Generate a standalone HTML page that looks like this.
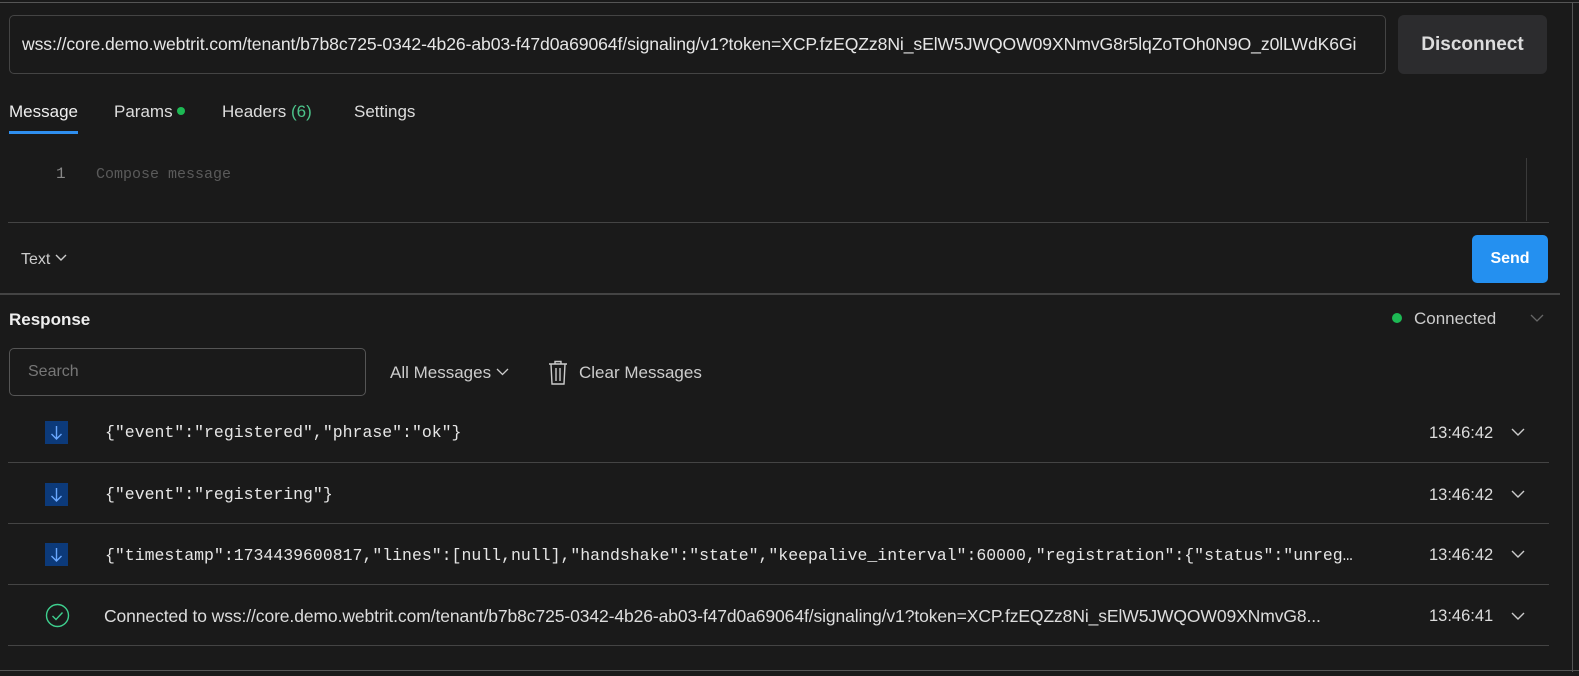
<!DOCTYPE html>
<html><head><meta charset="utf-8"><style>
*{box-sizing:border-box;margin:0;padding:0}
body{width:1579px;height:676px;background:#1a1a1a;font-family:"Liberation Sans",sans-serif;color:#d4d4d4;position:relative;overflow:hidden}
.a{position:absolute;white-space:nowrap}
.line{position:absolute;background:#444;height:1px}
.mono{font-family:"Liberation Mono",monospace;font-size:16.5px;color:#e6e6e6}
.arr{position:absolute;left:45px;width:23px;height:23px;background:#0c3a7a}
.time{position:absolute;left:1429px;font-size:16.5px;color:#ddd}
.chev{position:absolute;left:1511px}
</style></head><body>
<div class="line" style="left:0;top:2px;width:1579px;background:#555"></div>
<div class="line" style="left:1572px;top:2px;width:1px;height:670px;background:#555"></div>
<div class="line" style="left:0;top:670px;width:1579px;background:#555"></div>

<div class="a" style="left:9px;top:15px;width:1377px;height:59px;border:1px solid #444;border-radius:5px;overflow:hidden;padding:0 12px;line-height:57px;font-size:17.6px;color:#e6e6e6;letter-spacing:-0.1px">wss://core.demo.webtrit.com/tenant/b7b8c725-0342-4b26-ab03-f47d0a69064f/signaling/v1?token=XCP.fzEQZz8Ni_sElW5JWQOW09XNmvG8r5lqZoTOh0N9O_z0lLWdK6Gi</div>
<div class="a" style="left:1398px;top:15px;width:149px;height:59px;background:#2c2c2e;border-radius:6px;text-align:center;line-height:59px;font-size:19px;font-weight:bold;color:#ddd">Disconnect</div>

<div class="a" style="left:9px;top:102px;font-size:17px;color:#eee">Message</div>
<div class="a" style="left:9px;top:131px;width:69px;height:3px;background:#2f8fef"></div>
<div class="a" style="left:114px;top:102px;font-size:17px;color:#ddd">Params <span style="display:inline-block;width:8px;height:8px;border-radius:50%;background:#1db954;vertical-align:2px"></span></div>
<div class="a" style="left:222px;top:102px;font-size:17px;color:#ddd">Headers <span style="color:#4cc38a">(6)</span></div>
<div class="a" style="left:354px;top:102px;font-size:17px;color:#ddd">Settings</div>

<div class="a" style="left:56px;top:165px;font-family:'Liberation Mono',monospace;font-size:16px;color:#888">1</div>
<div class="a" style="left:96px;top:166px;font-family:'Liberation Mono',monospace;font-size:15px;color:#5a5a5a">Compose message</div>
<div class="a" style="left:1526px;top:158px;width:1px;height:63px;background:#3a3a3a"></div>
<div class="line" style="left:8px;top:222px;width:1541px"></div>

<div class="a" style="left:21px;top:251px;font-size:16px;color:#ccc">Text <svg width="12" height="8" viewBox="0 0 12 8" style="vertical-align:2px"><path d="M1 1l5 5 5-5" stroke="#ccc" stroke-width="1.4" fill="none"/></svg></div>
<div class="a" style="left:1472px;top:235px;width:76px;height:48px;background:#2490f0;border-radius:5px;text-align:center;line-height:48px;font-size:16px;font-weight:bold;color:#fff">Send</div>
<div class="line" style="left:0;top:293px;width:1560px;height:2px;background:#444"></div>

<div class="a" style="left:9px;top:310px;font-size:17px;font-weight:bold;color:#eee">Response</div>
<div class="a" style="left:1392px;top:313px;width:10px;height:10px;border-radius:50%;background:#1db954"></div>
<div class="a" style="left:1414px;top:309px;font-size:17px;color:#ccc">Connected</div>
<svg class="a" style="left:1530px;top:314px" width="14" height="9" viewBox="0 0 14 9"><path d="M1 1l6 6 6-6" stroke="#666" stroke-width="1.3" fill="none"/></svg>

<div class="a" style="left:9px;top:348px;width:357px;height:48px;border:1px solid #555;border-radius:5px;padding-left:18px;line-height:46px;font-size:16px;color:#777">Search</div>
<div class="a" style="left:390px;top:363px;font-size:17px;color:#ccc">All Messages <svg width="13" height="8" viewBox="0 0 13 8" style="vertical-align:2px"><path d="M1 1l5.5 5.5 5.5-5.5" stroke="#ccc" stroke-width="1.3" fill="none"/></svg></div>
<svg class="a" style="left:548px;top:360px" width="20" height="25" viewBox="0 0 20 25"><path d="M1 4h18M7 4V1.5h6V4M3 4l1 20h12l1-20M8 8v13M12 8v13" stroke="#ccc" stroke-width="1.4" fill="none"/></svg>
<div class="a" style="left:579px;top:363px;font-size:17px;color:#ccc">Clear Messages</div>

<div class="arr" style="top:421px"><svg width="23" height="23" viewBox="0 0 23 23"><path d="M11.5 5v13M6.5 13l5 5 5-5" stroke="#6aa8ff" stroke-width="1.4" fill="none"/></svg></div>
<div class="a mono" style="left:105px;top:423px">{"event":"registered","phrase":"ok"}</div>
<div class="time" style="top:424px">13:46:42</div>
<svg class="a chev" style="top:428px" width="14" height="9" viewBox="0 0 14 9"><path d="M1 1l6 6 6-6" stroke="#ccc" stroke-width="1.4" fill="none"/></svg>
<div class="line" style="left:8px;top:462px;width:1541px"></div>

<div class="arr" style="top:483px"><svg width="23" height="23" viewBox="0 0 23 23"><path d="M11.5 5v13M6.5 13l5 5 5-5" stroke="#6aa8ff" stroke-width="1.4" fill="none"/></svg></div>
<div class="a mono" style="left:105px;top:485px">{"event":"registering"}</div>
<div class="time" style="top:486px">13:46:42</div>
<svg class="a chev" style="top:490px" width="14" height="9" viewBox="0 0 14 9"><path d="M1 1l6 6 6-6" stroke="#ccc" stroke-width="1.4" fill="none"/></svg>
<div class="line" style="left:8px;top:523px;width:1541px"></div>

<div class="arr" style="top:543px"><svg width="23" height="23" viewBox="0 0 23 23"><path d="M11.5 5v13M6.5 13l5 5 5-5" stroke="#6aa8ff" stroke-width="1.4" fill="none"/></svg></div>
<div class="a mono" style="left:105px;top:546px;width:1250px;overflow:hidden">{"timestamp":1734439600817,"lines":[null,null],"handshake":"state","keepalive_interval":60000,"registration":{"status":"unreg…</div>
<div class="time" style="top:546px">13:46:42</div>
<svg class="a chev" style="top:550px" width="14" height="9" viewBox="0 0 14 9"><path d="M1 1l6 6 6-6" stroke="#ccc" stroke-width="1.4" fill="none"/></svg>
<div class="line" style="left:8px;top:584px;width:1541px"></div>

<svg class="a" style="left:45px;top:603px" width="25" height="25" viewBox="0 0 25 25"><circle cx="12.5" cy="12.5" r="11" stroke="#3ecf8e" stroke-width="1.4" fill="none"/><path d="M7.5 13l3.5 3.5 6.5-7" stroke="#3ecf8e" stroke-width="1.4" fill="none"/></svg>
<div class="a" style="left:104px;top:606px;font-size:17.5px;color:#ddd;letter-spacing:-0.1px;width:1250px;overflow:hidden">Connected to wss://core.demo.webtrit.com/tenant/b7b8c725-0342-4b26-ab03-f47d0a69064f/signaling/v1?token=XCP.fzEQZz8Ni_sElW5JWQOW09XNmvG8...</div>
<div class="time" style="top:607px">13:46:41</div>
<svg class="a chev" style="top:612px" width="14" height="9" viewBox="0 0 14 9"><path d="M1 1l6 6 6-6" stroke="#ccc" stroke-width="1.4" fill="none"/></svg>
<div class="line" style="left:8px;top:645px;width:1541px"></div>
</body></html>
